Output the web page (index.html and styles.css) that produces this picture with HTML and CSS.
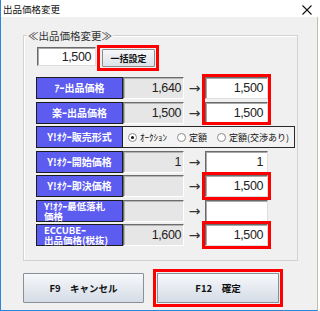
FILE: index.html
```html
<!DOCTYPE html>
<html lang="ja">
<head>
  <meta charset="UTF-8" />
  <title>出品価格変更</title>
  <link rel="stylesheet" href="styles.css">
</head>
<body>
  <div class="window">
    <div class="titlebar">
      <span class="title">出品価格変更</span>
      <svg class="close" width="10" height="10" viewBox="0 0 10 10">
        <path d="M0.5 0.5 L9.5 9.5 M9.5 0.5 L0.5 9.5" stroke="#111" stroke-width="1.1" fill="none"/>
      </svg>
    </div>

    <div class="client">
      <div class="group">
        <div class="group-title">≪出品価格変更≫</div>

        <div class="bulk">
          <div class="field bulk-input">1,500</div>
          <div class="mark-box">
            <button class="small-btn">一括設定</button>
          </div>
        </div>

        <div class="rows">
          <div class="pair">
            <div class="row">
              <div class="label">ｱｰ出品価格</div>
              <div class="val">1,640</div>
              <div class="arrow">→</div>
              <div class="field">1,500</div>
            </div>
            <div class="row">
              <div class="label">楽ｰ出品価格</div>
              <div class="val">1,500</div>
              <div class="arrow">→</div>
              <div class="field">1,500</div>
            </div>
            <div class="mark"></div>
          </div>

          <div class="row">
            <div class="label">Y!ｵｸｰ販売形式</div>
            <div class="radios">
              <span class="radio on"></span><span class="opt">ｵｰｸｼｮﾝ</span>
              <span class="radio"></span><span class="opt">定額</span>
              <span class="radio"></span><span class="opt">定額(交渉あり)</span>
            </div>
          </div>

          <div class="row">
            <div class="label">Y!ｵｸｰ開始価格</div>
            <div class="val">1</div>
            <div class="arrow">→</div>
            <div class="field">1</div>
          </div>

          <div class="row">
            <div class="label">Y!ｵｸｰ即決価格</div>
            <div class="val"></div>
            <div class="arrow">→</div>
            <div class="field hl">1,500</div>
          </div>

          <div class="row">
            <div class="label two">Y!ｵｸｰ最低落札<br>価格</div>
            <div class="val"></div>
            <div class="arrow">→</div>
            <div class="field"></div>
          </div>

          <div class="row">
            <div class="label two">ECCUBEｰ<br>出品価格(税抜)</div>
            <div class="val">1,600</div>
            <div class="arrow">→</div>
            <div class="field hl">1,500</div>
          </div>
        </div>
      </div>

      <div class="buttons">
        <button class="big-btn cancel">F9　キャンセル</button>
        <button class="big-btn ok">F12　確定</button>
      </div>
    </div>
  </div>
</body>
</html>
```

FILE: styles.css
```css
* {
  box-sizing: border-box;
}
body {
  margin: 0;
  background: #fff;
  font-family: "Noto Sans CJK JP", "Liberation Sans", sans-serif;
  color: #111;
}
.window {
  width: 320px;
  height: 311px;
  border-left: 1px solid #2b86d6;
  display: flex;
  flex-direction: column;
}
.titlebar {
  height: 17px;
  background: #fff;
  display: flex;
  align-items: center;
  justify-content: space-between;
  padding: 0 8px 0 2px;
}
.title {
  font-size: 9.5px;
  line-height: 12px;
}
.close {
  display: block;
  margin-top: 2px;
}
.client {
  flex: 1;
  margin-right: 2px;
  background: #f0f0f0;
  border-right: 1px solid #c4bba8;
  border-bottom: 1px solid #2b86d6;
  padding-top: 18px;
}
.group {
  margin-left: 22px;
  width: 275px;
  height: 226px;
  border: 1px solid #d2d2d2;
  box-shadow: inset 1px 1px 0 #fff;
}
.group-title {
  width: max-content;
  margin: -7px 0 0 3px;
  padding: 0 1px;
  background: #f0f0f0;
  font-size: 10.5px;
  line-height: 13px;
  color: #333;
}
.bulk {
  display: flex;
  align-items: flex-start;
  margin: 3px 0 0 13px;
}
.field {
  width: 63px;
  height: 100%;
  background: #fff;
  border: 1px solid;
  border-color: #6a6a6a #dedede #dedede #6a6a6a;
  box-shadow: inset 1px 1px 0 #a8a8a8;
  font-family: "Liberation Sans", sans-serif;
  font-size: 12.5px;
  letter-spacing: -0.4px;
  padding-right: 4px;
  display: flex;
  align-items: center;
  justify-content: flex-end;
  color: #222;
}
.bulk-input {
  width: 59px;
  height: 19px;
  margin-top: 2px;
  margin-right: 1px;
}
.mark-box {
  border: 3px solid #f00;
  padding: 1px 1px 1px 2px;
}
.small-btn {
  display: block;
  width: 53px;
  height: 18px;
  padding: 0;
  border: 1px solid #8c8c8c;
  border-radius: 1px;
  background: linear-gradient(#f6f7f9, #dde3ea);
  font-family: "Noto Sans CJK JP", sans-serif;
  font-size: 9px;
  font-weight: bold;
  color: #111;
}
.rows {
  display: flex;
  flex-direction: column;
  gap: 2.5px;
  margin: 6px 0 0 12px;
}
.pair {
  position: relative;
  display: flex;
  flex-direction: column;
  gap: 2.5px;
}
.mark {
  position: absolute;
  left: 166px;
  top: -3px;
  bottom: -1px;
  width: 69px;
  border: 3px solid #f00;
}
.row {
  display: flex;
  height: 22px;
}
.label {
  width: 87px;
  background: #5c5cf0;
  border: 1px solid #1c1c1c;
  color: #fff;
  font-size: 10px;
  font-weight: bold;
  line-height: 10px;
  display: flex;
  align-items: center;
  justify-content: center;
  white-space: nowrap;
}
.label.two {
  justify-content: flex-start;
  padding-left: 7px;
  font-size: 9.5px;
  line-height: 10px;
}
.val {
  width: 61px;
  background: #e6e6e6;
  border: 1px solid;
  border-color: #6d6d6d #fff #fff #6d6d6d;
  box-shadow: inset 1px 1px 0 #b4b4b4;
  font-family: "Liberation Sans", sans-serif;
  font-size: 12.5px;
  letter-spacing: -0.4px;
  display: flex;
  align-items: center;
  justify-content: flex-end;
  padding-right: 2px;
  color: #222;
}
.arrow {
  width: 21px;
  font-family: "DejaVu Sans", sans-serif;
  font-size: 14px;
  display: flex;
  align-items: center;
  justify-content: center;
  color: #333;
}
.field.hl {
  outline: 3px solid #f00;
}
.radios {
  width: 172px;
  border: 1px solid #2a2a2a;
  border-left: none;
  background: #f3f3f3;
  display: flex;
  align-items: center;
  padding-left: 5px;
  font-size: 9px;
}
.radio {
  width: 9px;
  height: 9px;
  border: 1px solid #8a8a8a;
  border-radius: 50%;
  background: #fff;
  margin-right: 3px;
  position: relative;
}
.radio.on::after {
  content: "";
  position: absolute;
  left: 2px;
  top: 2px;
  width: 3px;
  height: 3px;
  border-radius: 50%;
  background: #111;
}
.opt {
  margin-right: 10px;
}
.opt:last-child {
  margin-right: 0;
}
.buttons {
  display: flex;
  gap: 13px;
  margin: 12px 0 0 22px;
}
.big-btn {
  width: 121px;
  height: 30px;
  border: 1px solid #8a9099;
  border-radius: 1px;
  background: linear-gradient(#f7f8fa, #d4dce6);
  font-family: "Noto Sans CJK JP", sans-serif;
  font-size: 9.5px;
  font-weight: bold;
  color: #111;
  padding: 0;
}
.big-btn.ok {
  width: 122px;
  border-radius: 0;
  outline: 3px solid #f00;
  outline-offset: 1px;
}
```
